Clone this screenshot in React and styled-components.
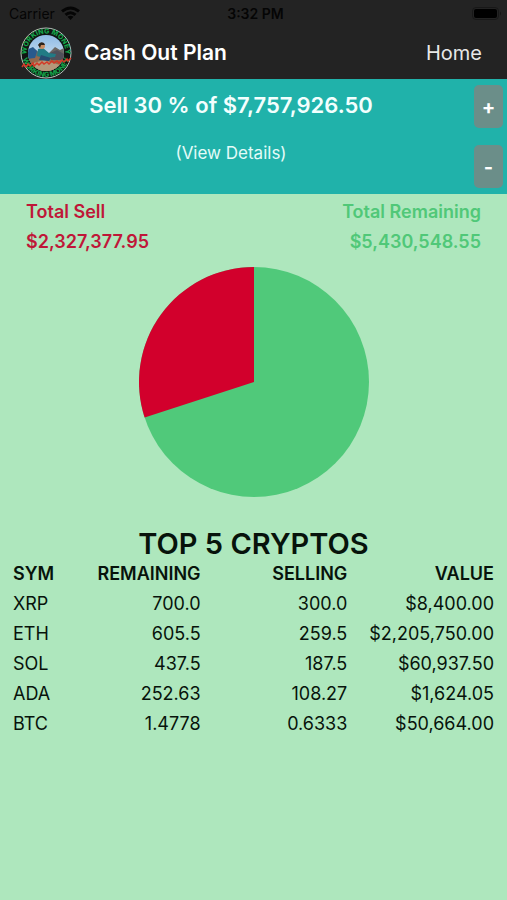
import { useState } from "react";
import styled, { createGlobalStyle } from "styled-components";

const TOTAL = 7757926.5;

const cryptos = [
  { sym: "XRP", remaining: "700.0", selling: "300.0", value: "$8,400.00" },
  { sym: "ETH", remaining: "605.5", selling: "259.5", value: "$2,205,750.00" },
  { sym: "SOL", remaining: "437.5", selling: "187.5", value: "$60,937.50" },
  { sym: "ADA", remaining: "252.63", selling: "108.27", value: "$1,624.05" },
  { sym: "BTC", remaining: "1.4778", selling: "0.6333", value: "$50,664.00" },
];

const money = (amount) =>
  amount.toLocaleString("en-US", { style: "currency", currency: "USD" });

// wedge of the pie that is being sold, drawn back from 12 o'clock
const sellPath = (percent) => {
  const angle = (percent / 100) * 2 * Math.PI;
  const x = 115 - 115 * Math.sin(angle);
  const y = 115 - 115 * Math.cos(angle);
  return `M115 115V0A115 115 0 ${percent > 50 ? 1 : 0} 0 ${x} ${y}Z`;
};

const Logo = () => (
  <LogoSvg viewBox="0 0 52 52" role="img" aria-label="Working Money">
    <defs>
      <linearGradient id="sky" x1="0" y1="0" x2="0" y2="1">
        <stop offset="0" stopColor="#8fbbe6" />
        <stop offset="1" stopColor="#e4eef2" />
      </linearGradient>
      <clipPath id="scene">
        <circle cx="26" cy="26" r="18" />
      </clipPath>
      <path id="topArc" d="M26 45.5A19.5 19.5 0 0 1 26 6.5A19.5 19.5 0 0 1 26 45.5" />
      <path id="bottomArc" d="M26 2A24 24 0 0 0 26 50A24 24 0 0 0 26 2" />
    </defs>
    <circle cx="26" cy="26" r="25" fill="#101512" stroke="#b9c2bd" strokeWidth="1" />
    <g clipPath="url(#scene)">
      <rect x="8" y="8" width="36" height="36" fill="url(#sky)" />
      <path d="M6 27L13 21L20 26L28 27L35 20L40 23L46 20V46H6Z" fill="#6b6763" />
      <path d="M6 33L17 29L27 33L37 28L46 31V46H6Z" fill="#96684b" />
      <path d="M10 37L24 33L40 38L36 46H14Z" fill="#b4987a" />
      <path d="M30 26L37 23L44 27V33H31Z" fill="#50505a" />
      <path d="M6 23L13 20L17 24L15 31L6 32Z" fill="#295a8d" />
      <path d="M18 22L23 21L29 26L36 27L35 30L26 31L17 29Z" fill="#217b85" />
      <path d="M21 28L31 31L29 34L19 33Z" fill="#264c72" />
      <circle cx="22" cy="19" r="3" fill="#c98d62" />
      <path d="M18 18Q20 14 24 16L25 18L21 18L20 21Z" fill="#2d231b" />
    </g>
    <LogoRing>
      <textPath href="#topArc" startOffset="50%">WORKING MONEY</textPath>
    </LogoRing>
    <LogoRing>
      <textPath href="#bottomArc" startOffset="50%">WORKING MONEY</textPath>
    </LogoRing>
    <path
      d="M2 40L4 37L6 40L8 37L10 39L13 36L14 39L17 36L19 38L22 35L24 37L27 35L29 37L32 34L34 36L37 34L39 36L42 33L44 35L47 32L48 34L51 31"
      fill="none"
      stroke="#d43825"
      strokeWidth="1.5"
    />
  </LogoSvg>
);

const App = () => {
  const [percent, setPercent] = useState(30);
  const sell = (TOTAL * percent) / 100;

  return (
    <Page>
      <GlobalStyle />
      <Header>
        <StatusBar>
          <Carrier>
            Carrier
            <svg width="19" height="14" viewBox="0 0 19 14" aria-hidden="true">
              <g fill="none" stroke="#050505" strokeWidth="3">
                <path d="M1 5.4Q9.5 -1.5 18 5.4" />
                <path d="M4.5 8.9Q9.5 4.5 14.5 8.9" />
              </g>
              <path d="M6.5 10.8Q9.5 8.5 12.5 10.8L9.5 14Z" fill="#050505" />
            </svg>
          </Carrier>
          <Clock>3:32 PM</Clock>
          <Battery>
            <svg width="30" height="13" viewBox="0 0 30 13" aria-hidden="true">
              <rect x="0.5" y="0.5" width="26" height="12" rx="3.5" fill="none" stroke="#181818" />
              <rect x="2" y="2" width="23" height="9" rx="2" fill="#000" />
              <path d="M28 4.5Q30 6.5 28 8.5Z" fill="#151515" />
            </svg>
          </Battery>
        </StatusBar>
        <NavBar>
          <Logo />
          <NavTitle>Cash Out Plan</NavTitle>
          <HomeLink href="#home">Home</HomeLink>
        </NavBar>
      </Header>

      <Summary>
        <SummaryText>
          <SellTitle>
            Sell {percent} % of {money(TOTAL)}
          </SellTitle>
          <DetailsLink href="#details">(View Details)</DetailsLink>
        </SummaryText>
        <Stepper>
          <StepButton
            type="button"
            aria-label="Sell more"
            onClick={() => setPercent(Math.min(percent + 1, 99))}
          >
            +
          </StepButton>
          <StepButton
            type="button"
            aria-label="Sell less"
            onClick={() => setPercent(Math.max(percent - 1, 0))}
          >
            -
          </StepButton>
        </Stepper>
      </Summary>

      <Totals>
        <Total $color="#bf1738">
          <span>Total Sell</span>
          <span>{money(sell)}</span>
        </Total>
        <Total $color="#50c878" $right>
          <span>Total Remaining</span>
          <span>{money(TOTAL - sell)}</span>
        </Total>
      </Totals>

      <Pie viewBox="0 0 230 230" role="img" aria-label={`${percent}% selling`}>
        <circle cx="115" cy="115" r="115" fill="#50c97a" />
        <path d={sellPath(percent)} fill="#d2002c" />
      </Pie>

      <TableTitle>TOP 5 CRYPTOS</TableTitle>
      <Table>
        <thead>
          <tr>
            <Th $width="15%">SYM</Th>
            <Th $width="24%">REMAINING</Th>
            <Th>SELLING</Th>
            <Th>VALUE</Th>
          </tr>
        </thead>
        <tbody>
          {cryptos.map((item) => (
            <tr key={item.sym}>
              <Td>{item.sym}</Td>
              <Td>{item.remaining}</Td>
              <Td>{item.selling}</Td>
              <Td>{item.value}</Td>
            </tr>
          ))}
        </tbody>
      </Table>
    </Page>
  );
};

export default App;

const GlobalStyle = createGlobalStyle`
  * {
    box-sizing: border-box;
  }

  body {
    margin: 0;
    background: #aee7bd;
    font-family: "Inter", "Liberation Sans", sans-serif;
  }
`;

const Page = styled.div`
  width: 100%;
  min-height: 100vh;
  display: flex;
  flex-direction: column;
  background: #aee7bd;
  color: #07130b;
`;

const Header = styled.header`
  background: #232323;
`;

const StatusBar = styled.div`
  display: grid;
  grid-template-columns: 1fr auto 1fr;
  align-items: center;
  height: 26px;
  padding: 0 5px 0 9px;
  color: #050505;
`;

const Carrier = styled.div`
  display: flex;
  align-items: center;
  gap: 6px;
  font-size: 14px;
`;

const Clock = styled.div`
  font-size: 14px;
  font-weight: 600;
`;

const Battery = styled.div`
  display: flex;
  justify-content: flex-end;
`;

const NavBar = styled.nav`
  display: flex;
  align-items: center;
  height: 53px;
  padding: 0 25px 0 20px;
`;

const LogoSvg = styled.svg`
  width: 52px;
  height: 52px;
  margin-right: 12px;
`;

const LogoRing = styled.text`
  font-size: 7px;
  font-weight: 800;
  text-anchor: middle;
  fill: #14a048;
`;

const NavTitle = styled.h1`
  flex: 1;
  margin: 0;
  font-size: 21px;
  font-weight: 600;
  color: #ffffff;
`;

const HomeLink = styled.a`
  font-size: 20px;
  color: #e8e8e8;
  text-decoration: none;
`;

const Summary = styled.section`
  display: flex;
  height: 115px;
  background: #20b2aa;
`;

const SummaryText = styled.div`
  flex: 1;
  display: flex;
  flex-direction: column;
  align-items: center;
  padding-top: 11px;
`;

const SellTitle = styled.h2`
  margin: 0 0 21px;
  font-size: 22px;
  line-height: 30px;
  font-weight: 600;
  color: #f3fffe;
`;

const DetailsLink = styled.a`
  font-size: 17px;
  line-height: 24px;
  color: #e4fbf8;
  text-decoration: none;
`;

const Stepper = styled.div`
  display: flex;
  flex-direction: column;
  justify-content: space-between;
  padding: 6px 4px 6px 12px;
`;

const StepButton = styled.button`
  width: 29px;
  height: 43px;
  padding: 0;
  border: none;
  border-radius: 5px;
  background: #6b8e89;
  color: #ffffff;
  font-family: inherit;
  font-size: 20px;
  font-weight: 700;
  cursor: pointer;
`;

const Totals = styled.section`
  display: flex;
  justify-content: space-between;
  padding: 3px 26px 0;
`;

const Total = styled.div`
  display: flex;
  flex-direction: column;
  align-items: ${({ $right }) => ($right ? "flex-end" : "flex-start")};
  font-size: 18px;
  line-height: 30px;
  font-weight: 600;
  color: ${({ $color }) => $color};
`;

const Pie = styled.svg`
  width: 230px;
  height: 230px;
  margin: 10px auto 32px;
`;

const TableTitle = styled.h2`
  margin: 0;
  font-size: 29px;
  line-height: 30px;
  font-weight: 600;
  text-align: center;
`;

const Table = styled.table`
  width: calc(100% - 26px);
  margin: 0 auto;
  table-layout: fixed;
  border-collapse: collapse;
  font-size: 18px;
  line-height: 30px;
`;

const Th = styled.th`
  width: ${({ $width }) => $width || "auto"};
  padding: 0;
  font-weight: 600;
  text-align: right;

  &:first-child {
    text-align: left;
  }
`;

const Td = styled.td`
  padding: 0;
  text-align: right;

  &:first-child {
    text-align: left;
  }
`;
